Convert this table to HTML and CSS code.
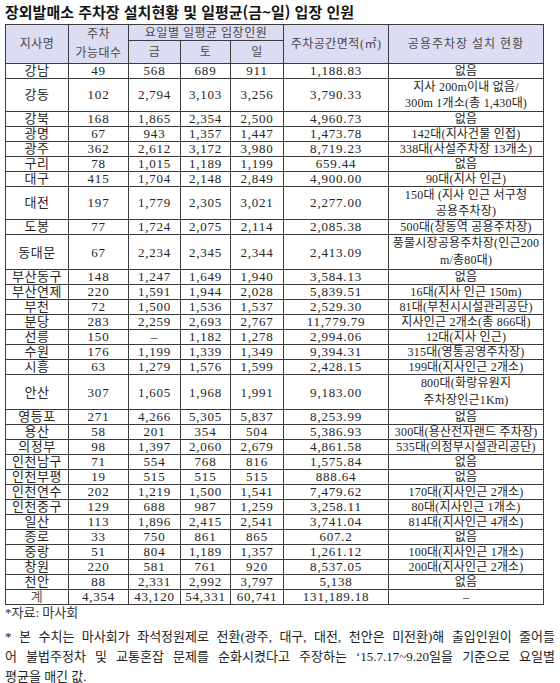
FILE: index.html
```html
<!DOCTYPE html>
<html lang="ko">
<head>
<meta charset="utf-8">
<title>장외발매소 주차장 설치현황</title>
<link rel="stylesheet" href="styles.css">
</head>
<body>
<h1 class="title">장외발매소 주차장 설치현황 및 일평균(금~일) 입장 인원</h1>
<table class="grid">
  <colgroup>
    <col class="c-name"><col class="c-cap"><col class="c-fri"><col class="c-sat"><col class="c-sun"><col class="c-area"><col class="c-pub">
  </colgroup>
  <thead>
    <tr class="h1">
      <th rowspan="2">지사명</th>
      <th rowspan="2" class="h-cap">주차<br>가능대수</th>
      <th colspan="3">요일별 일평균 입장인원</th>
      <th rowspan="2">주차공간면적(㎡)</th>
      <th rowspan="2" class="h-pub">공용주차장 설치 현황</th>
    </tr>
    <tr class="h2">
      <th>금</th><th>토</th><th>일</th>
    </tr>
  </thead>
  <tbody>
    <tr><td>강남</td><td>49</td><td>568</td><td>689</td><td>911</td><td>1,188.83</td><td>없음</td></tr>
    <tr class="two"><td>강동</td><td>102</td><td>2,794</td><td>3,103</td><td>3,256</td><td>3,790.33</td><td>지사 200m이내 없음/<br>300m 1개소(총 1,430대)</td></tr>
    <tr><td>강북</td><td>168</td><td>1,865</td><td>2,354</td><td>2,500</td><td>4,960.73</td><td>없음</td></tr>
    <tr><td>광명</td><td>67</td><td>943</td><td>1,357</td><td>1,447</td><td>1,473.78</td><td>142대(지사건물 인접)</td></tr>
    <tr><td>광주</td><td>362</td><td>2,612</td><td>3,172</td><td>3,980</td><td>8,719.23</td><td>338대(사설주차장 13개소)</td></tr>
    <tr><td>구리</td><td>78</td><td>1,015</td><td>1,189</td><td>1,199</td><td>659.44</td><td>없음</td></tr>
    <tr><td>대구</td><td>415</td><td>1,704</td><td>2,148</td><td>2,849</td><td>4,900.00</td><td>90대(지사 인근)</td></tr>
    <tr class="two"><td>대전</td><td>197</td><td>1,779</td><td>2,305</td><td>3,021</td><td>2,277.00</td><td>150대 (지사 인근 서구청<br>공용주차장)</td></tr>
    <tr><td>도봉</td><td>77</td><td>1,724</td><td>2,075</td><td>2,114</td><td>2,085.38</td><td>500대(창동역 공용주차장)</td></tr>
    <tr class="two tall"><td>동대문</td><td>67</td><td>2,234</td><td>2,345</td><td>2,344</td><td>2,413.09</td><td>풍물시장공용주차장(인근200<br>m/총80대)</td></tr>
    <tr><td>부산동구</td><td>148</td><td>1,247</td><td>1,649</td><td>1,940</td><td>3,584.13</td><td>없음</td></tr>
    <tr><td>부산연제</td><td>220</td><td>1,591</td><td>1,944</td><td>2,028</td><td>5,839.51</td><td>16대(지사 인근 150m)</td></tr>
    <tr><td>부천</td><td>72</td><td>1,500</td><td>1,536</td><td>1,537</td><td>2,529.30</td><td>81대(부천시시설관리공단)</td></tr>
    <tr><td>분당</td><td>283</td><td>2,259</td><td>2,693</td><td>2,767</td><td>11,779.79</td><td>지사인근 2개소(총 866대)</td></tr>
    <tr><td>선릉</td><td>150</td><td>–</td><td>1,182</td><td>1,278</td><td>2,994.06</td><td>12대(지사 인근)</td></tr>
    <tr><td>수원</td><td>176</td><td>1,199</td><td>1,339</td><td>1,349</td><td>9,394.31</td><td>315대(영통공영주차장)</td></tr>
    <tr><td>시흥</td><td>63</td><td>1,279</td><td>1,576</td><td>1,599</td><td>2,428.15</td><td>199대(지사인근 2개소)</td></tr>
    <tr class="two tall"><td>안산</td><td>307</td><td>1,605</td><td>1,968</td><td>1,991</td><td>9,183.00</td><td>800대(화랑유원지<br>주차장인근1Km)</td></tr>
    <tr><td>영등포</td><td>271</td><td>4,266</td><td>5,305</td><td>5,837</td><td>8,253.99</td><td>없음</td></tr>
    <tr><td>용산</td><td>58</td><td>201</td><td>354</td><td>504</td><td>5,386.93</td><td>300대(용산전자랜드 주차장)</td></tr>
    <tr><td>의정부</td><td>98</td><td>1,397</td><td>2,060</td><td>2,679</td><td>4,861.58</td><td>535대(의정부시설관리공단)</td></tr>
    <tr><td>인천남구</td><td>71</td><td>554</td><td>768</td><td>816</td><td>1,575.84</td><td>없음</td></tr>
    <tr><td>인천부평</td><td>19</td><td>515</td><td>515</td><td>515</td><td>888.64</td><td>없음</td></tr>
    <tr><td>인천연수</td><td>202</td><td>1,219</td><td>1,500</td><td>1,541</td><td>7,479.62</td><td>170대(지사인근 2개소)</td></tr>
    <tr><td>인천중구</td><td>129</td><td>688</td><td>987</td><td>1,259</td><td>3,258.11</td><td>80대(지사인근 1개소)</td></tr>
    <tr><td>일산</td><td>113</td><td>1,896</td><td>2,415</td><td>2,541</td><td>3,741.04</td><td>814대(지사인근 4개소)</td></tr>
    <tr><td>종로</td><td>33</td><td>750</td><td>861</td><td>865</td><td>607.2</td><td>없음</td></tr>
    <tr><td>중랑</td><td>51</td><td>804</td><td>1,189</td><td>1,357</td><td>1,261.12</td><td>100대(지사인근 1개소)</td></tr>
    <tr><td>창원</td><td>220</td><td>581</td><td>761</td><td>920</td><td>8,537.05</td><td>200대(지사인근 2개소)</td></tr>
    <tr><td>천안</td><td>88</td><td>2,331</td><td>2,992</td><td>3,797</td><td>5,138</td><td>없음</td></tr>
    <tr class="total"><td>계</td><td>4,354</td><td>43,120</td><td>54,331</td><td>60,741</td><td>131,189.18</td><td>–</td></tr>
  </tbody>
</table>
<p class="source">*자료: 마사회</p>
<div class="note">
  <span class="line">* 본 수치는 마사회가 좌석정원제로 전환(광주, 대구, 대전, 천안은 미전환)해 출입인원이 줄어들</span>
  <span class="line">어 불법주정차 및 교통혼잡 문제를 순화시켰다고 주장하는 ‘15.7.17~9.20일을 기준으로 요일별</span>
  <span class="line last">평균을 매긴 값.</span>
</div>
</body>
</html>
```
FILE: styles.css
```css
html, body {
  margin: 0;
  background: #ffffff;
}
body {
  padding: 2px 0 0 5px;
  width: 550px;
  font-family: "Liberation Serif", "Noto Sans CJK KR", serif;
  color: #222222;
}
.title {
  margin: 0 0 2px 0;
  font-family: "Noto Sans CJK KR", sans-serif;
  font-weight: 700;
  font-size: 15px;
  line-height: 20px;
  color: #151515;
  white-space: nowrap;
}
.grid {
  border-collapse: collapse;
  table-layout: fixed;
  width: 538px;
}
.c-name { width: 63px; }
.c-cap { width: 60px; }
.c-fri { width: 52px; }
.c-sat { width: 50px; }
.c-sun { width: 53px; }
.c-area { width: 105px; }
.c-pub { width: 155px; }

.grid th, .grid td {
  border: 1px solid #3a3a3a;
  padding: 0;
  text-align: center;
  vertical-align: middle;
  white-space: nowrap;
  overflow: hidden;
  font-weight: normal;
}
.grid th {
  background: #dcdcf3;
  color: #4a4a4a;
  font-size: 12px;
  letter-spacing: 0.5px;
}
.grid .h1 th { height: 14px; line-height: 14px; }
.grid .h2 th { height: 20px; line-height: 14px; }
.grid .h1 .h-cap { line-height: 19px; }
.grid .h1 .h-pub { letter-spacing: 1px; }

.grid td {
  font-size: 13px;
  line-height: 14px;
  height: 14px;
  letter-spacing: 0.8px;
  color: #252525;
}
.grid td:first-child {
  letter-spacing: 0.6px;
}
.grid td:last-child {
  font-size: 12px;
  letter-spacing: 0.2px;
}
.grid .two td { line-height: 16px; }
.grid .tall td { line-height: 17px; }
.grid .total td:first-child { color: #555555; }

.source {
  margin: 0;
  font-size: 13px;
  line-height: 16px;
  color: #333333;
}
.note {
  margin-top: 6px;
  font-size: 13px;
  line-height: 20px;
  color: #222222;
}
.note .line {
  display: block;
  white-space: nowrap;
  text-align: justify;
  text-align-last: justify;
}
.note .line.last {
  text-align-last: left;
}
```
